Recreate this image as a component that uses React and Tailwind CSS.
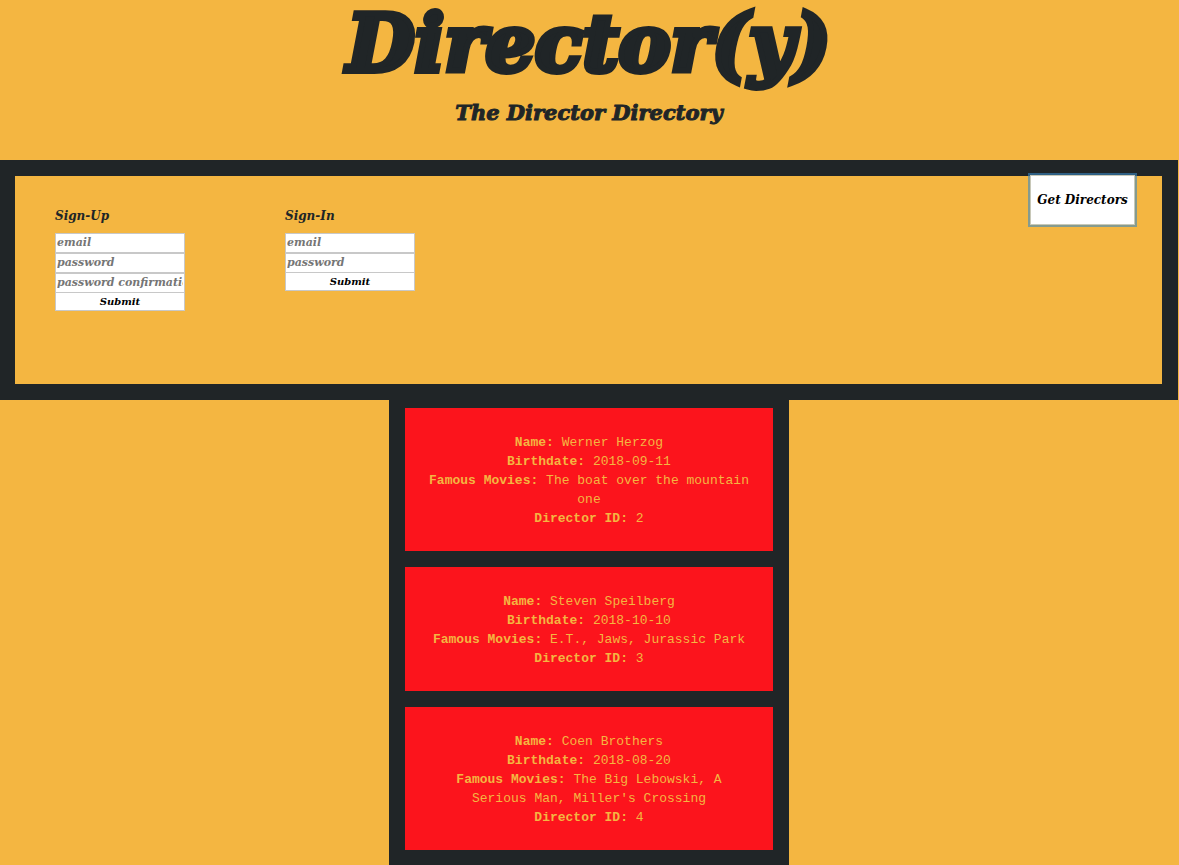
const directors = [
  { id: 2, name: "Werner Herzog", birthdate: "2018-09-11", movies: "The boat over the mountain one" },
  { id: 3, name: "Steven Speilberg", birthdate: "2018-10-10", movies: "E.T., Jaws, Jurassic Park" },
  { id: 4, name: "Coen Brothers", birthdate: "2018-08-20", movies: "The Big Lebowski, A Serious Man, Miller's Crossing" },
];

function CredentialsForm({ title, fields }) {
  return (
    <form className="w-[130px]" onSubmit={(e) => e.preventDefault()}>
      <h2 className="mb-2 text-[12px] leading-[18px]">{title}</h2>
      {fields.map((field) => (
        <input
          key={field}
          type={field === "email" ? "email" : "password"}
          placeholder={field}
          aria-label={`${title} ${field}`}
          className="block h-5 w-full border border-[#c8c8c8] bg-white px-px pb-px text-[11px] text-black italic placeholder:text-[#757575]"
        />
      ))}
      <button
        type="submit"
        className="block h-[18px] w-full border border-t-0 border-[#c8c8c8] bg-white text-[10px] leading-[16px] font-bold text-black italic"
      >
        Submit
      </button>
    </form>
  );
}

function Detail({ label, children }) {
  return (
    <p>
      <strong>{label}:</strong> {children}
    </p>
  );
}

export default function App() {
  return (
    <div className="flex min-h-screen flex-col bg-[#f4b641] pr-px font-['DejaVu_Serif',serif] font-bold text-[#202527] italic">
      <header className="h-40 text-center">
        <h1 className="text-[78px] leading-[88px] [-webkit-text-stroke:6px_#202527]">Director(y)</h1>
        <p className="pt-3 text-[21px] leading-[26px] [-webkit-text-stroke:1px_#202527]">The Director Directory</p>
      </header>

      <section className="flex h-60 items-start justify-between border-16 border-l-[15px] border-[#202527] pr-[27px] pl-10">
        <div className="flex gap-[100px] pt-[31px]">
          <CredentialsForm title="Sign-Up" fields={["email", "password", "password confirmation"]} />
          <CredentialsForm title="Sign-In" fields={["email", "password"]} />
        </div>
        <button
          type="button"
          className="-mt-px h-[50px] w-[105px] border border-[#c8c8b8] bg-white text-[12px] font-bold whitespace-nowrap text-black ring-2 ring-[#3b88c3]/60 italic"
        >
          Get Directors
        </button>
      </section>

      <main className="mx-auto flex w-full max-w-[400px] flex-1 flex-col gap-4 bg-[#202527] px-4 py-2 font-['Liberation_Mono','Courier_New',monospace] font-normal not-italic">
        {directors.map((d) => (
          <article
            key={d.id}
            className="bg-[#fc141c] px-[22px] pt-[25px] pb-[23px] text-center text-[13px] leading-[19px] text-[#f4b641]"
          >
            <Detail label="Name">{d.name}</Detail>
            <Detail label="Birthdate">{d.birthdate}</Detail>
            <Detail label="Famous Movies">{d.movies}</Detail>
            <Detail label="Director ID">{d.id}</Detail>
          </article>
        ))}
      </main>
    </div>
  );
}
